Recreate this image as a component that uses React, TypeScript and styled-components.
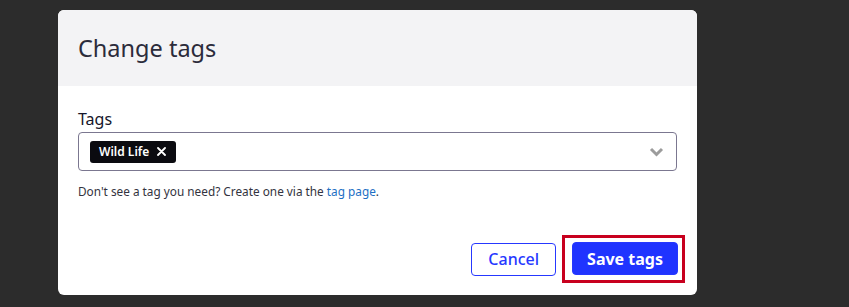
import React from "react";
import styled, { createGlobalStyle } from "styled-components";

const GlobalStyle = createGlobalStyle`
  html, body {
    margin: 0;
    padding: 0;
    background: #2c2c2c;
    font-family: "Noto Sans", "Open Sans", sans-serif;
  }
  * { box-sizing: border-box; }
`;

const Page = styled.div`
  width: 849px;
  height: 307px;
  overflow: hidden;
  padding: 10px 0 0 58px;
  background: #2c2c2c;
`;

const Modal = styled.div`
  width: 639px;
  background: #ffffff;
  border-radius: 6px;
`;

const Header = styled.div`
  height: 76px;
  display: flex;
  align-items: center;
  padding: 0 20px;
  background: #f3f3f5;
  border-radius: 6px 6px 0 0;
`;

const Title = styled.h2`
  margin: 0;
  font-size: 23.5px;
  font-weight: 400;
  color: #2b2b3b;
`;

const Body = styled.div`
  padding: 22px 20px 0;
`;

const Label = styled.label`
  display: block;
  font-size: 16px;
  line-height: 22px;
  color: #16162a;
  margin-bottom: 2px;
`;

const Select = styled.div`
  height: 39px;
  display: flex;
  align-items: center;
  justify-content: space-between;
  padding: 0 12px 0 11px;
  border: 1px solid #7b7790;
  border-radius: 4px;
`;

const Chip = styled.span`
  display: inline-flex;
  align-items: center;
  gap: 8px;
  height: 22px;
  padding: 0 10px 0 9px;
  background: #0b0b10;
  color: #ffffff;
  border-radius: 3px;
  font-size: 12px;
  font-weight: 600;
`;

const Chevron = styled.svg`
  width: 15px;
  height: 10px;
`;

const Help = styled.p`
  margin: 12px 0 0;
  font-size: 11.8px;
  line-height: 16px;
  color: #333340;
`;

const HelpLink = styled.a`
  color: #1d6fc4;
  text-decoration: none;
`;

const Footer = styled.div`
  display: flex;
  justify-content: flex-end;
  align-items: center;
  gap: 6px;
  padding: 36px 20px 12px;
`;

const Highlight = styled.div`
  border: 3px solid #c8001e;
  padding: 4px 4px 5px 7px;
  margin-right: -8px;
`;

const Button = styled.button<{ $primary?: boolean }>`
  display: block;
  height: 33px;
  padding: 0 ${(p) => (p.$primary ? 14 : 16)}px;
  border-radius: 4px;
  font-family: inherit;
  font-size: 16px;
  font-weight: ${(p) => (p.$primary ? 700 : 500)};
  cursor: pointer;
  border: 1px solid #2638ff;
  background: ${(p) => (p.$primary ? "#2034ff" : "#ffffff")};
  color: ${(p) => (p.$primary ? "#ffffff" : "#2638ff")};
`;

export default function App() {
  return (
    <Page>
      <GlobalStyle />
      <Modal>
        <Header>
          <Title>Change tags</Title>
        </Header>
        <Body>
          <Label>Tags</Label>
          <Select>
            <Chip>
              Wild Life
              <svg width="9" height="9" viewBox="0 0 9 9">
                <path d="M1 1L8 8M8 1L1 8" stroke="#fff" strokeWidth="1.8" strokeLinecap="round" />
              </svg>
            </Chip>
            <Chevron viewBox="0 0 15 10">
              <path d="M2 2L7.5 7.5L13 2" fill="none" stroke="#9c9c9c" strokeWidth="3" />
            </Chevron>
          </Select>
          <Help>
            Don't see a tag you need? Create one via the <HelpLink href="#">tag page</HelpLink>.
          </Help>
        </Body>
        <Footer>
          <Button>Cancel</Button>
          <Highlight>
            <Button $primary>Save tags</Button>
          </Highlight>
        </Footer>
      </Modal>
    </Page>
  );
}
